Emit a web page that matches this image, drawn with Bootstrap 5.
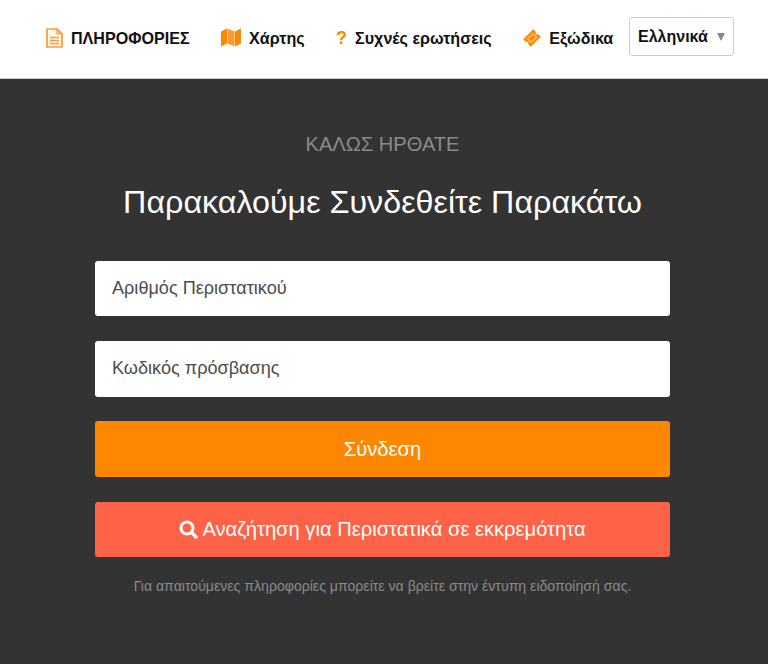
<!DOCTYPE html>
<html lang="el">
<head>
    <meta charset="UTF-8">
    <meta name="viewport" content="width=device-width, initial-scale=1.0">
    <title>Σύνδεση</title>
    <link rel="stylesheet" href="https://cdn.jsdelivr.net/npm/bootstrap@5.3.0/dist/css/bootstrap.min.css">
    <style>
        body {
            font-family: "Liberation Sans", Arial, sans-serif;
            background-color: #333;
            height: 664px;
            overflow: hidden;
        }
        .top-bar {
            height: 79px;
            background: #fff;
            border-bottom: 1px solid #ccc;
            padding: 0 34px 0 46px;
        }
        .top-links { gap: 31.5px; margin-top: -2px; }
        .top-link {
            color: #111;
            font-size: 16.1px;
            font-weight: 700;
            text-decoration: none;
            gap: 8px;
            white-space: nowrap;
        }
        .top-link svg { flex: none; }
        .q-mark {
            color: #ff8700;
            font-size: 18px;
            line-height: 1;
        }
        .lang-box {
            width: 105px;
            height: 39px;
            flex: none;
            border: 1px solid #ccc;
            border-radius: 3px;
            padding: 0 8px;
            color: #111;
            font-size: 16px;
            font-weight: 700;
            margin-top: -5px;
        }
        .lang-arrow {
            width: 0;
            height: 0;
            border-left: 4px solid transparent;
            border-right: 4px solid transparent;
            border-top: 8px solid #888;
        }
        .login-area {
            width: 575px;
            margin-left: 95px;
            padding-top: 53px;
        }
        .welcome-text {
            color: #8a8a8a;
            font-size: 20.1px;
            line-height: 24px;
            margin-bottom: 27px;
        }
        .login-title {
            color: #fff;
            font-size: 32.25px;
            font-weight: 400;
            line-height: 38px;
            margin-bottom: 39.8px;
        }
        .login-form { gap: 24.67px; }
        .login-input {
            height: 55.67px;
            border: 0;
            border-radius: 3px;
            padding: 0 17px;
            font-size: 18.1px;
            color: #333;
        }
        .login-input::placeholder { color: #4d4d4d; opacity: 1; }
        .login-btn {
            height: 55.67px;
            border: 0;
            border-radius: 3px;
            color: #fff;
            font-size: 20.16px;
        }
        .btn-orange { background: #ff8700; }
        .btn-coral { background: #ff6347; }
        .btn-orange:hover, .btn-coral:hover { color: #fff; }
        .hint-text {
            color: #8a8a8a;
            font-size: 14.1px;
            margin-top: 19px;
        }
    </style>
</head>
<body>

<!-- Header -->
<div class="top-bar d-flex align-items-center justify-content-between">
    <div class="top-links d-flex align-items-center">
        <a class="top-link d-flex align-items-center" href="#">
            <svg width="17" height="20" viewBox="0 0 17 20"><path d="M1 1h10l5 5v13H1z" fill="#fff8f0" stroke="#ff9a33" stroke-width="1.700" stroke-linejoin="round"/><path d="M11 1v5h5z" fill="#ffc78f" stroke="#ff9a33" stroke-width="1.200" stroke-linejoin="round"/><path d="M4 9.500h9M4 12.500h9M4 15.500h9" stroke="#ff9a33" stroke-width="1.500"/></svg>
            ΠΛΗΡΟΦΟΡΙΕΣ
        </a>
        <a class="top-link d-flex align-items-center" href="#">
            <svg width="20" height="19" viewBox="0 0 20 19"><path d="M0 3.500 6 .5v15l-6 3z" fill="#ff8700"/><path d="M6.500.5l7 3v15l-7-3z" fill="#ff9a33"/><path d="M14 3.500l6-3v15l-6 3z" fill="#ff8700"/></svg>
            Χάρτης
        </a>
        <a class="top-link d-flex align-items-center" href="#">
            <span class="q-mark">?</span>
            Συχνές ερωτήσεις
        </a>
        <a class="top-link d-flex align-items-center" href="#">
            <svg width="18" height="18" viewBox="0 0 19 19"><g transform="rotate(-45 9.500 9.500)"><path d="M2 4h15v3.900a1.600 1.600 0 0 0 0 3.200V15H2v-3.900a1.600 1.600 0 0 0 0-3.200z" fill="#ff8700"/><rect x="5.500" y="6.800" width="8" height="5.400" fill="none" stroke="#ffc78f" stroke-width="1.300"/></g></svg>
            Εξώδικα
        </a>
    </div>
    <div class="lang-box d-flex align-items-center justify-content-between">
        Ελληνικά
        <span class="lang-arrow"></span>
    </div>
</div>

<!-- Login -->
<div class="login-area text-center">
    <div class="welcome-text">ΚΑΛΩΣ ΗΡΘΑΤΕ</div>
    <h1 class="login-title">Παρακαλούμε Συνδεθείτε Παρακάτω</h1>
    <form class="login-form d-grid">
        <input class="form-control login-input" type="text" placeholder="Αριθμός Περιστατικού">
        <input class="form-control login-input" type="password" placeholder="Κωδικός πρόσβασης">
        <button class="btn login-btn btn-orange" type="button">Σύνδεση</button>
        <button class="btn login-btn btn-coral d-flex align-items-center justify-content-center gap-1" type="button">
            <svg width="19" height="19" viewBox="0 0 19 19"><circle cx="8" cy="8" r="6" fill="none" stroke="#fff" stroke-width="3"/><path d="M12.500 12.500 17 17" stroke="#fff" stroke-width="3.400" stroke-linecap="round"/></svg>
            Αναζήτηση για Περιστατικά σε εκκρεμότητα
        </button>
    </form>
    <div class="hint-text">Για απαιτούμενες πληροφορίες μπορείτε να βρείτε στην έντυπη ειδοποίησή σας.</div>
</div>

<script src="https://cdn.jsdelivr.net/npm/bootstrap@5.3.0/dist/js/bootstrap.bundle.min.js"></script>
</body>
</html>
